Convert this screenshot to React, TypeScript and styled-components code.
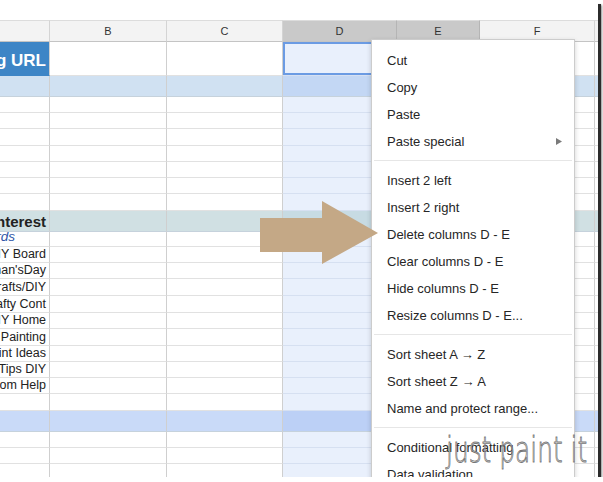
import React from "react";
import styled, { createGlobalStyle } from "styled-components";

const Global = createGlobalStyle`
  html, body { margin: 0; padding: 0; background: #ffffff; }
  * { box-sizing: border-box; }
`;

const COLS = "50px 117px 116px 114px 83px 115px 20px";

type Tone = "plain" | "band" | "teal" | "band2";

const toneBg: Record<Tone, [string, string]> = {
  plain: ["#ffffff", "#e9f0fc"],
  band: ["#d0e1f2", "#c3d7f4"],
  teal: ["#d0e0e3", "#c7dbe3"],
  band2: ["#c9daf8", "#bcd0f6"],
};

const Frame = styled.div`
  position: relative;
  width: 598px;
  height: 477px;
  overflow: hidden;
  background: #ffffff;
  box-shadow: 3px 4px 0 #2c2c2c, 4px 5px 2px rgba(0, 0, 0, 0.45);
  font-family: "Liberation Sans", Arial, sans-serif;
`;

const TopGap = styled.div`
  height: 20px;
  background: #ffffff;
`;

const Sheet = styled.div`
  display: flex;
  flex-direction: column;
`;

const Row = styled.div<{ $h: number }>`
  display: grid;
  grid-template-columns: ${COLS};
  height: ${(p) => p.$h}px;
`;

const HeadCell = styled.div<{ $sel?: boolean }>`
  display: flex;
  align-items: center;
  justify-content: center;
  background: ${(p) => (p.$sel ? "#c9c9c9" : "#f3f3f3")};
  border-right: 1px solid ${(p) => (p.$sel ? "#b5b5b5" : "#d4d4d4")};
  border-bottom: 1px solid #c4c4c4;
  border-top: 1px solid #dcdcdc;
  font-size: 11px;
  color: #333333;
`;

const Cell = styled.div<{ $tone: Tone; $sel?: boolean; $active?: boolean }>`
  position: relative;
  background: ${(p) => toneBg[p.$tone][p.$sel ? 1 : 0]};
  border-right: 1px solid ${(p) => (p.$sel ? "#c9d5ea" : "#cfcfcf")};
  border-bottom: 1px solid
    ${(p) => (p.$tone !== "plain" ? "#c6d2dc" : p.$sel ? "#d6e0f1" : "#e1e1e1")};
  ${(p) => (p.$active ? "box-shadow: inset 0 0 0 2px #6b9be3;" : "")}
`;

type Kind = "title" | "section" | "link" | "normal";

const LabelCell = styled.div<{ $tone: Tone; $title?: boolean; $kind?: Kind }>`
  display: flex;
  justify-content: flex-end;
  align-items: flex-end;
  overflow: hidden;
  padding: 0 ${(p) => (p.$kind === "link" ? "34px" : "3px")} 1px 0;
  background: ${(p) => (p.$title ? "#3d85c6" : toneBg[p.$tone][0])};
  border-right: 1px solid #cfcfcf;
  border-bottom: 1px solid ${(p) => (p.$title ? "#3d85c6" : p.$tone !== "plain" ? "#c6d2dc" : "#e1e1e1")};
`;

const Label = styled.span<{ $kind: Kind }>`
  flex-shrink: 0;
  white-space: nowrap;
  line-height: 1.15;
  font-size: ${(p) =>
    p.$kind === "title" ? "17px" : p.$kind === "section" ? "15px" : p.$kind === "link" ? "13.5px" : "12.5px"};
  font-weight: ${(p) => (p.$kind === "title" || p.$kind === "section" ? 700 : 400)};
  font-style: ${(p) => (p.$kind === "link" ? "italic" : "normal")};
  color: ${(p) =>
    p.$kind === "title" ? "#ffffff" : p.$kind === "link" ? "#2f56a8" : "#222222"};
  padding-bottom: ${(p) => (p.$kind === "title" ? "3px" : "0")};
`;

const Menu = styled.div`
  position: absolute;
  left: 371px;
  top: 39px;
  width: 204px;
  height: 470px;
  background: #ffffff;
  border: 1px solid #cccccc;
  box-shadow: 0 2px 5px rgba(0, 0, 0, 0.18);
  padding-top: 7px;
  display: flex;
  flex-direction: column;
`;

const Item = styled.div`
  height: 27px;
  flex-shrink: 0;
  display: flex;
  align-items: center;
  justify-content: space-between;
  padding: 0 12px 0 15px;
  font-size: 13px;
  color: #262626;
  white-space: nowrap;
`;

const Separator = styled.div`
  height: 1px;
  flex-shrink: 0;
  margin: 5px 2px 6px 2px;
  background: #e6e6e6;
`;

const Arrow = styled.svg`
  position: absolute;
  left: 0;
  top: 0;
  pointer-events: none;
`;

const Watermark = styled.div`
  position: absolute;
  left: 446px;
  top: 433px;
  font-family: "DejaVu Sans", "Lato", sans-serif;
  font-weight: 200;
  font-size: 35px;
  line-height: 1;
  white-space: nowrap;
  color: rgba(222, 222, 222, 0.75);
  -webkit-text-stroke: 0.9px rgba(95, 95, 95, 0.85);
  transform: scaleX(0.71);
  transform-origin: left top;
  pointer-events: none;
`;

type RowDef = { h: number; tone: Tone; text?: string; kind?: Kind; title?: boolean };

const rows: RowDef[] = [
  { h: 34, tone: "plain", text: "Blog URL", kind: "title", title: true },
  { h: 21, tone: "band" },
  { h: 16, tone: "plain" },
  { h: 16, tone: "plain" },
  { h: 17, tone: "plain" },
  { h: 16, tone: "plain" },
  { h: 16, tone: "plain" },
  { h: 16, tone: "plain" },
  { h: 17, tone: "plain" },
  { h: 21, tone: "teal", text: "Pinterest", kind: "section" },
  { h: 15, tone: "plain", text: "Boards", kind: "link" },
  { h: 16, tone: "plain", text: "DIY Board", kind: "normal" },
  { h: 16, tone: "plain", text: "Woman'sDay", kind: "normal" },
  { h: 17, tone: "plain", text: "Crafts/DIY", kind: "normal" },
  { h: 17, tone: "plain", text: "Crafty Cont", kind: "normal" },
  { h: 16, tone: "plain", text: "DIY Home", kind: "normal" },
  { h: 17, tone: "plain", text: "Faux Painting", kind: "normal" },
  { h: 16, tone: "plain", text: "Paint Ideas", kind: "normal" },
  { h: 16, tone: "plain", text: "Tips DIY", kind: "normal" },
  { h: 16, tone: "plain", text: "Room Help", kind: "normal" },
  { h: 17, tone: "plain" },
  { h: 21, tone: "band2" },
  { h: 16, tone: "plain" },
  { h: 16, tone: "plain" },
  { h: 16, tone: "plain" },
];

const headers = [
  { l: "", sel: false },
  { l: "B", sel: false },
  { l: "C", sel: false },
  { l: "D", sel: true },
  { l: "E", sel: true },
  { l: "F", sel: false },
  { l: "", sel: false },
];

type MenuEntry = { label: string; sub?: boolean } | "sep";

const menu: MenuEntry[] = [
  { label: "Cut" },
  { label: "Copy" },
  { label: "Paste" },
  { label: "Paste special", sub: true },
  "sep",
  { label: "Insert 2 left" },
  { label: "Insert 2 right" },
  { label: "Delete columns D - E" },
  { label: "Clear columns D - E" },
  { label: "Hide columns D - E" },
  { label: "Resize columns D - E..." },
  "sep",
  { label: "Sort sheet A \u2192 Z" },
  { label: "Sort sheet Z \u2192 A" },
  { label: "Name and protect range..." },
  "sep",
  { label: "Conditional formatting" },
  { label: "Data validation" },
];

export default function App() {
  return (
    <Frame>
      <Global />
      <TopGap />
      <Sheet>
        <Row $h={22}>
          {headers.map((h, i) => (
            <HeadCell key={i} $sel={h.sel}>
              {h.l}
            </HeadCell>
          ))}
        </Row>
        {rows.map((r, ri) => (
          <Row key={ri} $h={r.h}>
            <LabelCell $tone={r.tone} $title={r.title} $kind={r.kind}>
              {r.text && <Label $kind={r.kind || "normal"}>{r.text}</Label>}
            </LabelCell>
            <Cell $tone={r.tone} />
            <Cell $tone={r.tone} />
            <Cell $tone={r.tone} $sel $active={ri === 0} />
            <Cell $tone={r.tone} $sel />
            <Cell $tone={r.tone} />
            <Cell $tone={r.tone} />
          </Row>
        ))}
      </Sheet>

      <Menu>
        {menu.map((m, i) =>
          m === "sep" ? (
            <Separator key={i} />
          ) : (
            <Item key={i}>
              <span>{m.label}</span>
              {m.sub && (
                <svg width="6" height="7" viewBox="0 0 6 7">
                  <polygon points="0,0 6,3.5 0,7" fill="#7a7a7a" />
                </svg>
              )}
            </Item>
          )
        )}
      </Menu>

      <Arrow width="598" height="477" viewBox="0 0 598 477">
        <polygon
          points="260,218 322,218 322,201 378,233 322,264 322,252 260,252"
          fill="#c4a886"
        />
      </Arrow>

      <Watermark>just paint it</Watermark>
    </Frame>
  );
}
